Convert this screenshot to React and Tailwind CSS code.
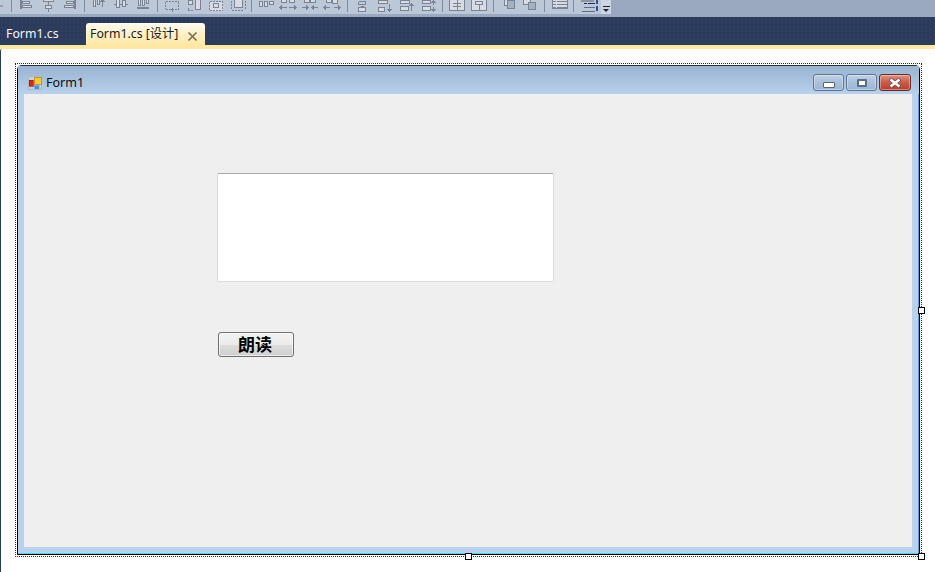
import React from 'react'

const uiFont = "font-['Noto_Sans','Noto_Sans_CJK_SC',sans-serif]"

// toolbar glyphs, each drawn in a 22x14 cell; the tops are cut off by the window edge
const toolbarGroups = [
  [
    <><path d="M5.5 0v9M6.5 0v9" strokeWidth="1" /><rect x="7.5" y="1.5" width="7" height="2" /><rect x="7.5" y="5.5" width="9" height="2" /></>,
    <><path d="M11.5 0v12" /><rect x="6.5" y="-1.5" width="10" height="3" /><rect x="8.5" y="5.5" width="6" height="3" /></>,
    <><path d="M15.5 0v9M16.5 0v9" /><rect x="7.5" y="1.5" width="7" height="2" /><rect x="5.5" y="5.5" width="9" height="2" /></>,
  ],
  [
    <><rect x="5.5" y="-1.5" width="2" height="8" /><rect x="9.5" y="-1.5" width="2" height="6" /><path d="M14.5 7V0M12.5 2l2-2 2 2" /></>,
    <><path d="M4 4.5h14" /><rect x="6.5" y="-0.5" width="3" height="8" /><rect x="12.5" y="0.5" width="3" height="6" /></>,
    <><rect x="6" y="-1.5" width="2" height="7" /><rect x="10" y="-1.5" width="2" height="7" /><rect x="14" y="-1.5" width="2" height="5" /><path d="M5 7.5h12M5 8.5h12" /></>,
  ],
  [
    <><path d="M4.5 1.5h13M4.5 1.5v7M17.5 1.5v7M4.5 9.5h4M14 9.5h4" strokeDasharray="2 1" /><path d="M9 9.5h4M11 7.5v4" /></>,
    <><rect x="12.5" y="-1.5" width="5" height="11" /><rect x="5.5" y="0.5" width="4" height="4" /><path d="M5 7.5v3M5 10.5h6" strokeDasharray="2 1" /></>,
    <><path d="M4.5 1.5h13v9h-13zM4.5 1.5" strokeDasharray="2 1" /><rect x="8.5" y="3.5" width="5" height="4" /></>,
    <><rect x="7.5" y="-0.5" width="8" height="8" /><path d="M4 1v8M18 1v8M5 10.5h12" strokeDasharray="2 1" /></>,
  ],
  [
    <><rect x="4.5" y="1.5" width="3" height="5" /><rect x="9.5" y="1.5" width="3" height="5" /><rect x="14.5" y="1.5" width="4" height="3" /></>,
    <><rect x="4.5" y="-2.5" width="5" height="5" /><rect x="12.5" y="-2.5" width="5" height="5" /><path d="M3 7.5h7M5 5.5l-2 2 2 2M19 7.5h-7M17 5.5l2 2-2 2" /></>,
    <><rect x="5.5" y="-2.5" width="5" height="5" /><rect x="11.5" y="-2.5" width="5" height="5" /><path d="M3 7.5h6M7 5.5l2 2-2 2M19 7.5h-6M15 5.5l-2 2 2 2" /></>,
    <><rect x="5.5" y="-2.5" width="5" height="5" /><rect x="11.5" y="-1.5" width="5" height="5" /><path d="M3 7.5h6M5 5.5l-2 2 2 2M19 7.5h-6M17 5.5l2 2-2 2" /></>,
  ],
  [
    <><path d="M7.5 1.5h7M7.5 4.5h7M7.5 1.5v3M14.5 1.5v3M9.5 6.5h3" /><rect x="7.5" y="7.5" width="7" height="4" /></>,
    <><rect x="5.5" y="0.5" width="9" height="3" /><rect x="5.5" y="7.5" width="6" height="4" /><path d="M16.5 4v7M14.5 9l2 2 2-2" /></>,
    <><rect x="5.5" y="0.5" width="9" height="3" /><rect x="5.5" y="6.5" width="8" height="4" /><path d="M16.5 11V4M14.5 6l2-2 2 2" /></>,
    <><rect x="5.5" y="0.5" width="8" height="3" /><rect x="5.5" y="6.5" width="8" height="4" /><path d="M16.5 1v4M14.5 3l2-2 2 2M16.5 11V7M14.5 9l2 2 2-2" /></>,
  ],
  [
    <><rect x="3.5" y="-0.5" width="15" height="11" /><path d="M11 0v10M7 3.5h8M7 6.5h8" /></>,
    <><rect x="3.5" y="-0.5" width="15" height="11" /><path d="M11 1v9" /><rect x="7.5" y="1.5" width="7" height="3" /></>,
  ],
  [
    <><rect x="7.5" y="-2.5" width="8" height="8" /><rect x="10.5" y="0.5" width="7" height="8" className="fill-[#a7b0be]" /></>,
    <><rect x="4.5" y="-2.5" width="7" height="7" /><rect x="9.5" y="2.5" width="7" height="7" className="fill-[#a7b0be]" /></>,
  ],
  [
    <><rect x="4.5" y="-1.5" width="15" height="10" /><path d="M9 1.5h10M9 4.5h10M9 7.5h10M4.5 1.5h3M4.5 4.5h3M4.5 7.5h3" /></>,
  ],
]

function ToolbarIcon({ children }) {
  return (
    <svg width="22" height="14" viewBox="0 0 22 14" className="block fill-[#d6dbe4] stroke-[#7a8494]" shapeRendering="crispEdges">
      {children}
    </svg>
  )
}

function Separator({ className = '' }) {
  return <div className={`w-px h-3 bg-[#808b9e] ${className}`} />
}

function Toolbar() {
  return (
    <div className="h-[17px] bg-[#9aa8c0] shrink-0 overflow-hidden">
      <div className="w-[611px] h-[14px] bg-[#bcc7d8] flex items-start gap-[3px]">
        {/* tail of an icon that is scrolled off to the left */}
        <div className="w-[3px] h-[2px] mt-[5px] bg-[#98a2b2] -mr-[3px]" />
        {toolbarGroups.map((group, i) => (
          <React.Fragment key={i}>
            <Separator className={i === 0 ? 'ml-[8px]' : i === 3 ? '-ml-px' : i === 4 ? 'ml-px' : ''} />
            <div className="flex">
              {group.map((icon, j) => <ToolbarIcon key={j}>{icon}</ToolbarIcon>)}
            </div>
          </React.Fragment>
        ))}
        <Separator />
        <div className="flex">
          <svg width="22" height="14" viewBox="0 0 22 14" className="block" shapeRendering="crispEdges">
            <rect x="4" y="-1" width="13" height="3" fill="#8b94a2" />
            <path d="M7 3h3v1H7zM11 3h7v1h-7z" fill="#1c2c50" />
            <path d="M7 7h11v1H7zM5 11h13v1H5z" fill="#5c6a82" />
            <path d="M19 0h2v4h-2zM19 6h2v5h-2z" fill="#2d4f9a" />
          </svg>
          <div className="w-[10px] h-[14px] ml-[2px] bg-[#cdd5e2] flex flex-col items-center pt-[6px]">
            <div className="w-[7px] h-px bg-[#1c2530]" />
            <div className="mt-[2px] w-0 h-0 border-x-[3px] border-x-transparent border-t-[3px] border-t-[#1c2530]" />
          </div>
        </div>
      </div>
    </div>
  )
}

function TabStrip() {
  return (
    <div className="h-[28px] shrink-0 flex items-end bg-[#2b3b5b] bg-[radial-gradient(#303f60_1px,transparent_1px)] bg-[length:4px_4px]">
      <div className={`w-[86px] h-[22px] pl-[6px] pt-[2px] text-[12.3px] leading-[18px] text-[#f4f6fa] ${uiFont}`}>Form1.cs</div>
      <div className="w-[119px] h-[22px] rounded-t-[3px] bg-gradient-to-b from-[#fffcf2] via-[#fff0c8] to-[#ffe8a6] pl-[4px] pt-[2px] flex items-start">
        <span className={`text-[12.3px] leading-[18px] text-[#1c1c1c] whitespace-nowrap ${uiFont}`}>Form1.cs [设计]</span>
        <svg width="12" height="12" viewBox="0 0 12 12" className="ml-auto mr-[6px] mt-[6px] stroke-[#7b6f52]" strokeWidth="1.7">
          <path d="M1.5 1.5l8 8M9.5 1.5l-8 8" />
        </svg>
      </div>
    </div>
  )
}

function FormIcon() {
  return (
    <svg width="14" height="14" viewBox="0 0 14 14" className="block" shapeRendering="crispEdges">
      <rect x="0.5" y="0.5" width="13" height="13" fill="#c3d2e4" stroke="#aeb6c0" />
      <rect x="1" y="4" width="4" height="6" fill="#d4281e" stroke="#8c1c14" strokeWidth="0.6" />
      <rect x="6" y="1" width="7" height="7" fill="#f9c93c" stroke="#b58a1e" strokeWidth="0.8" />
      <rect x="6" y="9" width="5" height="4" fill="#4f8fe0" stroke="#9cc0ec" strokeWidth="0.6" />
    </svg>
  )
}

function WindowButton({ className = '', children }) {
  return (
    <div className={`h-[17px] rounded-[3px] border flex items-center justify-center shadow-[inset_0_0_0_1px_rgba(255,255,255,0.35)] ${className}`}>
      {children}
    </div>
  )
}

function TitleBar() {
  return (
    <div className="h-[28px] shrink-0 bg-gradient-to-b from-[#99b4d1] to-[#b9d1ea] flex items-start pl-[10px] pr-[8px] pt-[8px]">
      <div className="mt-[2px]"><FormIcon /></div>
      <span className={`ml-[4px] text-[12.5px] leading-[18px] text-[#0c0c14] ${uiFont}`}>Form1</span>
      <div className="ml-auto flex gap-[2px]">
        <WindowButton className="w-[31px] border-[#5e7493] bg-gradient-to-b from-[#c0d2e6] via-[#a9c0da] to-[#9cb5d2]">
          <div className="w-[12px] h-[6px] mt-[5px] bg-white border border-[#5b6470] rounded-[1px]" />
        </WindowButton>
        <WindowButton className="w-[31px] border-[#5e7493] bg-gradient-to-b from-[#c0d2e6] via-[#a9c0da] to-[#9cb5d2]">
          <div className="w-[10px] h-[8px] bg-white border-2 border-[#5b6f88] rounded-[1px]" />
        </WindowButton>
        <WindowButton className="w-[32px] border-[#6b2b2e] bg-gradient-to-b from-[#dd9384] via-[#c95a47] to-[#b8402e]">
          <svg width="14" height="10" viewBox="0 0 14 10">
            <path d="M2 1l10 8M12 1L2 9" stroke="#6d4a48" strokeWidth="4" />
            <path d="M2.5 1.5l9 7M11.5 1.5l-9 7" stroke="#fff" strokeWidth="2.6" />
          </svg>
        </WindowButton>
      </div>
    </div>
  )
}

function Handle({ className }) {
  return <div className={`absolute w-[7px] h-[7px] bg-white border border-black ${className}`} />
}

export default function App() {
  return (
    <div className="w-[935px] h-[572px] overflow-hidden flex flex-col bg-white">
      <Toolbar />
      <TabStrip />
      <div className="h-[4px] shrink-0 bg-[#ffe8a6]" />
      <div className="flex-1 border-l border-[#2b3b5b] rounded-tl-[2px] pl-[14px] pt-[14px]">
        {/* selection rectangle of the designer */}
        <div className="relative w-[907px] h-[494px] border border-dotted border-[#333] p-px">
          <div className="h-[490px] rounded-t-[5px] border border-black border-t-[#30343a] bg-[#b9d1ea] flex flex-col">
            <TitleBar />
            <div className="flex-1 pl-[6px] pr-[6px] pb-[6px] border-r border-r-[#4aa3dc] border-b border-b-[#56d0e6]">
              <div className="h-full bg-[#efefef] pl-[193px] pt-[79px]">
                <div className="w-[337px] h-[109px] bg-white rounded-[2px] border border-[#dcdcdc] border-t-[#a8a8a8]" />
                <button className="block mt-[50px] ml-px w-[76px] h-[25px] pr-[2px] pb-[2px] rounded-[3px] border border-[#707070] bg-[linear-gradient(#f3f3f3_0%,#ebebeb_50%,#dddddd_50%,#cfcfcf_100%)] shadow-[inset_0_0_0_1px_rgba(255,255,255,0.6)] text-[17px] leading-[21px] font-bold text-black font-['Noto_Sans_CJK_SC',sans-serif]">
                  朗读
                </button>
              </div>
            </div>
          </div>
          <Handle className="left-[902px] top-[243px]" />
          <Handle className="left-[902px] top-[489px]" />
          <Handle className="left-[449px] top-[489px]" />
        </div>
      </div>
    </div>
  )
}
